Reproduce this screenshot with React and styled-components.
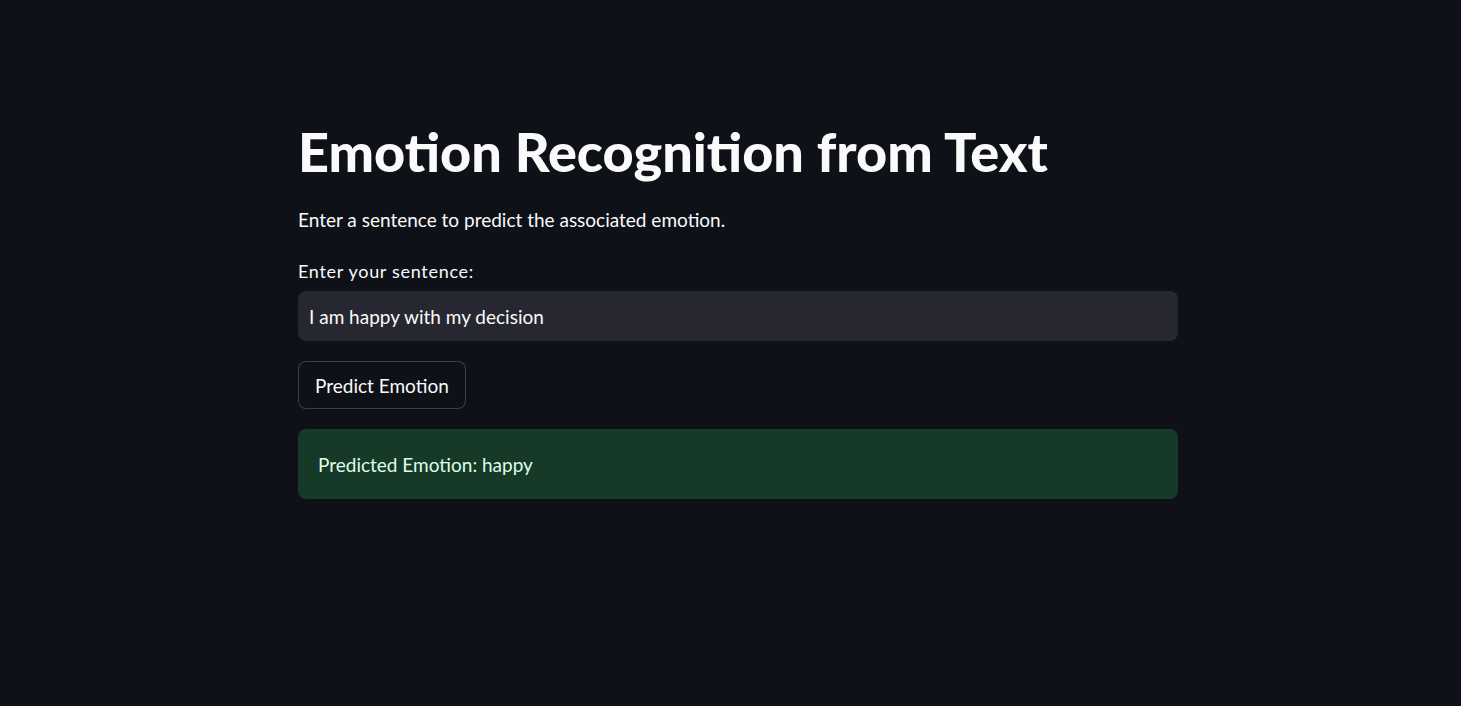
import React from "react";
import styled, { createGlobalStyle } from "styled-components";

const colors = {
  bg: "#0e1117",
  text: "#fafafa",
  inputBg: "#262730",
  successBg: "#173928",
  successText: "#dffde9",
  border: "rgba(250, 250, 250, 0.2)",
};

const GlobalStyle = createGlobalStyle`
  html, body {
    margin: 0;
    padding: 0;
    background: ${colors.bg};
    color: ${colors.text};
    font-family: "Lato", "Noto Sans", sans-serif;
  }
`;

const Page = styled.div`
  min-height: 706px;
  background: ${colors.bg};
  display: flex;
  justify-content: flex-start;
`;

const Main = styled.main`
  width: 880px;
  margin-left: 298px;
  padding-top: 118px;
  display: flex;
  flex-direction: column;
`;

const Title = styled.h1`
  margin: 0;
  font-size: 54px;
  font-weight: 900;
  line-height: 68px;
  color: ${colors.text};
`;

const Subtitle = styled.p`
  margin: 20px 0 0;
  font-size: 19px;
  line-height: 28px;
`;

const Label = styled.label`
  margin-top: 27px;
  font-size: 18px;
  line-height: 20px;
  letter-spacing: 0.7px;
`;

const Input = styled.input`
  margin-top: 10px;
  height: 50px;
  box-sizing: border-box;
  border: none;
  border-radius: 8px;
  background: ${colors.inputBg};
  color: ${colors.text};
  padding: 0 11px;
  font-family: inherit;
  font-size: 19px;
  outline: none;
`;

const Button = styled.button`
  align-self: flex-start;
  margin-top: 20px;
  height: 48px;
  padding: 0 16px;
  border-radius: 8px;
  border: 1px solid ${colors.border};
  background: ${colors.bg};
  color: ${colors.text};
  font-family: inherit;
  font-size: 19px;
  cursor: pointer;
`;

const Alert = styled.div`
  margin-top: 20px;
  height: 70px;
  box-sizing: border-box;
  border-radius: 8px;
  background: ${colors.successBg};
  color: ${colors.successText};
  padding: 0 20px;
  display: flex;
  align-items: center;
  font-size: 19px;
`;

export default function App() {
  return (
    <Page>
      <GlobalStyle />
      <Main>
        <Title>Emotion Recognition from Text</Title>
        <Subtitle>Enter a sentence to predict the associated emotion.</Subtitle>
        <Label htmlFor="sentence">Enter your sentence:</Label>
        <Input id="sentence" defaultValue="I am happy with my decision" />
        <Button>Predict Emotion</Button>
        <Alert>Predicted Emotion: happy</Alert>
      </Main>
    </Page>
  );
}
